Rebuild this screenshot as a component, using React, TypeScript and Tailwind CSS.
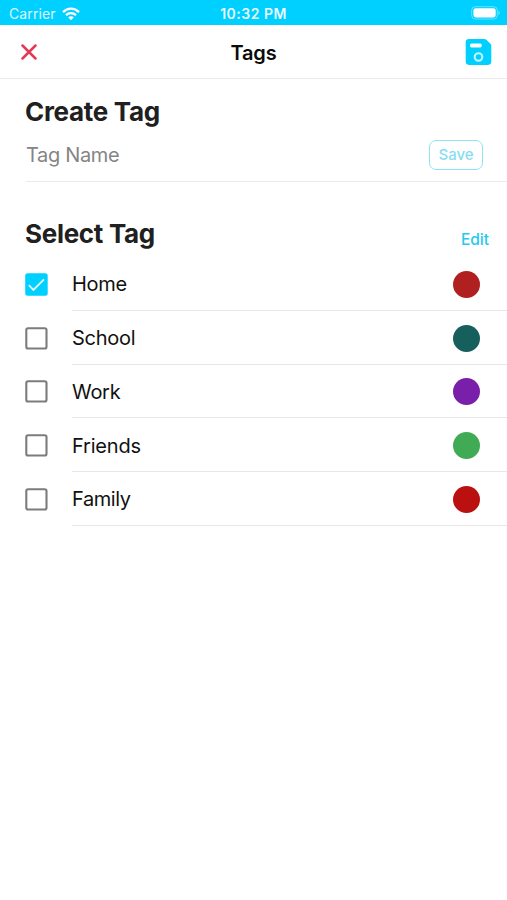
import React, { useState } from "react";

type Tag = { name: string; color: string; tracking: string };

const initialTags: Tag[] = [
  { name: "Home", color: "bg-[#b02020]", tracking: "tracking-[-0.3px]" },
  { name: "School", color: "bg-[#165f5d]", tracking: "tracking-[-0.25px]" },
  { name: "Work", color: "bg-[#7a1fa9]", tracking: "tracking-[-0.3px]" },
  { name: "Friends", color: "bg-[#41aa55]", tracking: "tracking-[-0.2px]" },
  { name: "Family", color: "bg-[#bb1010]", tracking: "tracking-[-0.4px]" },
];

function StatusBar() {
  return (
    <div className="grid h-[25px] grid-cols-3 items-center bg-[#00d0ff] pt-[2px] text-white">
      <div className="flex items-center gap-[6px] pl-[9px]">
        <span className="text-[14px] leading-none tracking-[0.1px] opacity-85">Carrier</span>
        <svg width="18" height="14" viewBox="0 0 18 14" fill="none" stroke="white" strokeWidth="2.3">
          <path d="M1 5.1C5.6.4 12.4.4 17 5.1" />
          <path d="M4 8.2c2.9-2.8 7.1-2.8 10 0" />
          <path d="M6.2 10.3c1.6-1.5 4-1.5 5.6 0L9 13.3z" fill="white" stroke="none" />
        </svg>
      </div>
      <span className="pt-px text-center text-[14px] leading-none font-semibold tracking-[0.5px] whitespace-nowrap opacity-90">10:32 PM</span>
      <div className="flex justify-end pr-[6px] pb-[1px]">
        <svg width="30" height="14" viewBox="0 0 30 14">
          <rect x=".7" y=".7" width="25.6" height="12.3" rx="3.6" fill="none" stroke="white" strokeOpacity=".4" />
          <rect x="2.4" y="2.3" width="22.3" height="9.1" rx="2.3" fill="white" />
          <path d="M27.5 4.8c1.7.7 1.7 3.4 0 4.1z" fill="white" fillOpacity=".5" />
        </svg>
      </div>
    </div>
  );
}

function Header() {
  return (
    <header className="grid h-[54px] grid-cols-3 items-center border-b border-[#ececec]">
      <button className="pl-[21px]" aria-label="Close">
        <svg width="16" height="16" viewBox="0 0 16 16" stroke="#e23b55" strokeWidth="2.5" strokeLinecap="round">
          <path d="M1.5 1.5l13 13M14.5 1.5l-13 13" />
        </svg>
      </button>
      <h1 className="pt-[2px] text-center text-[20px] leading-none font-semibold tracking-[-0.2px] text-[#0b0b0b]">Tags</h1>
      <button className="flex justify-end pr-[15px]" aria-label="Save tags">
        <svg width="27" height="27" viewBox="0 0 27 27">
          <path d="M4 1h15.4c.9 0 1.6.3 2.2.9l3.8 3.8c.6.6.9 1.3.9 2.2V23.6a3.3 3.3 0 0 1-3.3 3.3H4a3.3 3.3 0 0 1-3.3-3.3V4.3A3.3 3.3 0 0 1 4 1z" fill="#00d0ff" />
          <rect x="5" y="5.4" width="11.7" height="4" rx="1.6" fill="white" />
          <circle cx="13.5" cy="19" r="3.8" fill="none" stroke="#c9f6ff" strokeWidth="2" />
        </svg>
      </button>
    </header>
  );
}

function Checkbox({ checked }: { checked: boolean }) {
  return (
    <svg width="23" height="23" viewBox="0 0 23 23" fill="none">
      {checked ? (
        <>
          <rect x=".2" y=".2" width="22.5" height="22.5" rx="2.5" fill="#00d0ff" />
          <path d="M3.8 12.2l4.6 4.6L19 6.3" stroke="#e4fbff" strokeWidth="1.9" />
        </>
      ) : (
        <rect x="1.3" y="1.3" width="20.2" height="20.2" rx="1.8" stroke="#7c7c7c" strokeWidth="2.1" />
      )}
    </svg>
  );
}

export default function App() {
  const [selected, setSelected] = useState("Home");
  return (
    <div className="min-h-[900px] w-full bg-white font-['Inter','Liberation_Sans',sans-serif]">
      <StatusBar />
      <Header />
      <section>
        <h2 className="pt-[17px] pl-[25px] text-[26px] leading-[32px] font-bold tracking-[-0.3px] text-[#202020]">Create Tag</h2>
        <div className="ml-[26px] flex h-[54px] items-center justify-between border-b border-[#ebebeb] pr-[24px]">
          <span className="text-[20px] leading-none tracking-[-0.35px] text-[#858585]">Tag Name</span>
          <button className="h-[30px] w-[54px] rounded-[7px] border-[1.5px] border-[#8fe5f7] text-[15px] leading-none font-medium text-[#86def2]">Save</button>
        </div>
      </section>
      <section>
        <div className="flex h-[75px] items-end justify-between pr-[18px] pb-[7px] pl-[25px]">
          <h2 className="text-[26px] leading-[32px] font-bold tracking-[-0.3px] text-[#202020]">Select Tag</h2>
          <button className="text-[15.5px] leading-[20px] font-medium text-[#27c9ef]">Edit</button>
        </div>
        <ul>
          {initialTags.map((tag) => (
            <li key={tag.name} className="flex h-[53.75px] pl-[25px]" onClick={() => setSelected(tag.name)}>
              <div className="flex w-[47px] items-center pt-[1px]">
                <Checkbox checked={selected === tag.name} />
              </div>
              <div className="flex flex-1 items-center justify-between border-b border-[#e7e7e7] pt-[2px] pr-[27px]">
                <span className={`text-[20px] leading-none text-[#111] ${tag.tracking}`}>{tag.name}</span>
                <span className={`size-[27px] rounded-full ${tag.color}`} />
              </div>
            </li>
          ))}
        </ul>
      </section>
    </div>
  );
}
